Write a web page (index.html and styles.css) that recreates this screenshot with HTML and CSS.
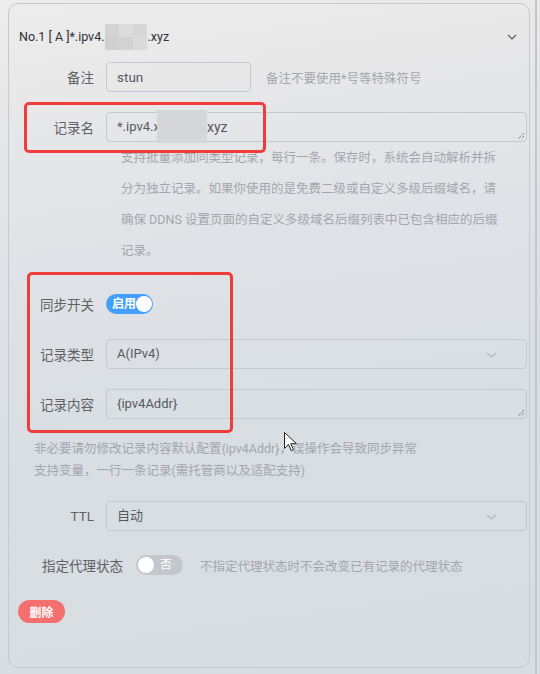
FILE: index.html
```html
<!DOCTYPE html>
<html lang="zh-CN">
<head>
<meta charset="utf-8">
<title>DDNS 记录</title>
<link rel="stylesheet" href="styles.css">
</head>
<body>
<div class="card">
  <div class="card-head">
    <span class="title">No.1 [ A ]*.ipv4.<span class="mask-title"><i></i><i></i><i></i><i></i><i></i><i></i></span>.xyz</span>
    <svg class="chev-head" width="10" height="6" viewBox="0 0 10 6"><path d="M1 1l4 4 4-4" fill="none" stroke="#555a60" stroke-width="1.2"/></svg>
  </div>

  <div class="form">
    <div class="row">
      <span class="lbl">备注</span>
      <div class="ctl ctl-short">stun</div>
      <span class="hint">备注不要使用*号等特殊符号</span>
    </div>

    <div class="row row-gap">
      <span class="lbl">记录名</span>
      <div class="ctl ctl-area">*.ipv4.x<span class="mask-area"></span><span class="after-mask">xyz</span>
        <svg class="grip" width="8" height="8" viewBox="0 0 8 8"><path d="M7 1L1 7M7 4L4 7" stroke="#555" stroke-width="1" stroke-dasharray="1 1"/></svg>
      </div>
    </div>
    <div class="help help-wide">支持批量添加同类型记录，每行一条。保存时，系统会自动解析并拆<br>分为独立记录。如果你使用的是免费二级或自定义多级后缀域名，请<br>确保 DDNS 设置页面的自定义多级域名后缀列表中已包含相应的后缀<br>记录。</div>

    <div class="row row-switch">
      <span class="lbl">同步开关</span>
      <span class="switch switch-on"><span class="switch-text">启用</span><span class="knob"></span></span>
    </div>

    <div class="row row-gap">
      <span class="lbl">记录类型</span>
      <div class="ctl ctl-select">A(IPv4)
        <svg class="chev-sel" width="11" height="6" viewBox="0 0 11 6"><path d="M1 1l4.5 4 4.5-4" fill="none" stroke="#b3b6bb" stroke-width="1.1"/></svg>
      </div>
    </div>

    <div class="row row-gap">
      <span class="lbl">记录内容</span>
      <div class="ctl ctl-area">{ipv4Addr}
        <svg class="grip" width="8" height="8" viewBox="0 0 8 8"><path d="M7 1L1 7M7 4L4 7" stroke="#555" stroke-width="1" stroke-dasharray="1 1"/></svg>
      </div>
    </div>

    <div class="help help-narrow">非必要请勿修改记录内容默认配置{ipv4Addr}，误操作会导致同步异常<br>支持变量，一行一条记录(需托管商以及适配支持)</div>

    <div class="row row-ttl">
      <span class="lbl">TTL</span>
      <div class="ctl ctl-select">自动
        <svg class="chev-sel" width="11" height="6" viewBox="0 0 11 6"><path d="M1 1l4.5 4 4.5-4" fill="none" stroke="#b3b6bb" stroke-width="1.1"/></svg>
      </div>
    </div>

    <div class="row row-proxy">
      <span class="lbl-proxy">指定代理状态</span>
      <span class="switch switch-off"><span class="knob"></span><span class="switch-text">否</span></span>
      <span class="hint hint-proxy">不指定代理状态时不会改变已有记录的代理状态</span>
    </div>

    <div class="actions">
      <button class="btn-del">删除</button>
    </div>
  </div>

  <div class="mark mark-name"></div>
  <div class="mark mark-group"></div>
</div>

<div class="scroll-edge"></div>

<svg class="cursor" width="13" height="20" viewBox="0 0 13 20"><path d="M0.5 0.5v16l4-4 2.8 6.3 2.2-1-2.7-6.1h5.7z" fill="#fff" stroke="#222" stroke-width="1" stroke-linejoin="round"/></svg>
</body>
</html>
```

FILE: styles.css
```css
* { box-sizing: border-box; }

html, body {
  margin: 0;
  height: 100%;
}

body {
  width: 540px;
  height: 674px;
  overflow: hidden;
  position: relative;
  padding: 3px 10px 0 8px;
  font-family: Roboto, "Noto Sans CJK SC", sans-serif;
  color: #606266;
  background: linear-gradient(172deg, #ececec 0%, #e8e8e9 14%, #dfe2e6 38%, #d9dee3 62%, #d8dde2 100%);
}

.card {
  position: relative;
  height: 665px;
  border: 1px solid #c6c9cd;
  border-radius: 10px;
  padding: 0 2px 0 10px;
}

.card-head {
  display: flex;
  align-items: center;
  justify-content: space-between;
  padding: 22px 10px 14px 0;
  height: 58px;
}

.title {
  font-size: 12.5px;
  line-height: 22px;
  color: #303133;
  display: flex;
  align-items: center;
  white-space: nowrap;
}

.mask-title {
  display: inline-grid;
  grid-template-columns: repeat(3, 14px);
  grid-template-rows: 13px 13px;
  width: 42px;
  height: 26px;
  margin-right: 1px;
}
.mask-title i:nth-child(1) { background: #d3d3d4; }
.mask-title i:nth-child(2) { background: #dcdcdd; }
.mask-title i:nth-child(3) { background: #d7d7d8; }
.mask-title i:nth-child(4) { background: #d0d0d1; }
.mask-title i:nth-child(5) { background: #d2d2d3; }
.mask-title i:nth-child(6) { background: #dadadb; }

.chev-head { display: block; }

.form {
  display: flex;
  flex-direction: column;
}

.row {
  display: flex;
  align-items: center;
  height: 30px;
}

.row-gap { margin-top: 20px; }
.row-switch { margin-top: 23px; }
.row-ttl { margin-top: 19px; }
.row-proxy { margin-top: 19px; }

.lbl {
  width: 75px;
  margin-right: 12px;
  text-align: right;
  font-size: 13.5px;
  color: #606266;
  flex: none;
  white-space: nowrap;
}

.lbl-proxy {
  padding-left: 23px;
  margin-right: 13px;
  font-size: 13.5px;
  color: #606266;
  flex: none;
  white-space: nowrap;
}

.ctl {
  position: relative;
  height: 30px;
  border: 1px solid #c5c8ce;
  border-radius: 4px;
  padding: 0 10px;
  font-size: 13px;
  line-height: 28px;
  color: #555a62;
  white-space: nowrap;
}

.ctl-short {
  width: 145px;
  margin-right: 15px;
  font-size: 13.5px;
}

.ctl-area,
.ctl-select {
  flex: 1;
}

.grip {
  position: absolute;
  right: 1px;
  bottom: 1px;
}

.mask-area {
  position: absolute;
  left: 50px;
  top: -3px;
  width: 50px;
  height: 33px;
  background: #d5d6d7;
}

.after-mask {
  position: absolute;
  left: 100px;
  top: 0;
  font-size: 14px;
}

.ctl-area:first-child { font-size: 14px; }

.chev-sel {
  position: absolute;
  right: 29px;
  top: 12px;
}

.hint {
  font-size: 12.5px;
  color: #a3a6ad;
  white-space: nowrap;
}

.hint-proxy { margin-left: 17px; }

.help {
  font-size: 12.5px;
  color: #a3a6ad;
  white-space: nowrap;
}

.help-wide {
  padding-left: 102px;
  line-height: 31px;
}

.help-narrow {
  margin-top: 19px;
  padding-left: 15px;
  line-height: 22px;
}

.switch {
  display: inline-flex;
  align-items: center;
  justify-content: space-between;
  width: 47px;
  height: 20px;
  border-radius: 10px;
  padding: 0 2px;
  flex: none;
  white-space: nowrap;
}

.switch-on {
  background: #449ffc;
  padding-left: 6px;
}

.switch-off {
  background: #c3c6cc;
  padding-right: 11px;
}

.switch-text {
  font-size: 12px;
  font-weight: 700;
  color: #fff;
  line-height: 20px;
}

.switch-off .switch-text { font-weight: 400; }

.knob {
  width: 16px;
  height: 16px;
  border-radius: 50%;
  background: #fff;
  flex: none;
}

.actions {
  margin-top: 20px;
  margin-left: -1px;
}

.btn-del {
  display: block;
  width: 47px;
  height: 23px;
  border: none;
  border-radius: 12px;
  background: #f46f6f;
  color: #fff;
  font-family: Roboto, "Noto Sans CJK SC", sans-serif;
  font-size: 12px;
  font-weight: 700;
  padding: 0;
}

.mark {
  position: absolute;
  border: 3px solid #ef3c3d;
  border-radius: 5px;
}

.mark-name {
  left: 15px;
  top: 98px;
  width: 242px;
  height: 51px;
}

.mark-group {
  left: 18px;
  top: 268px;
  width: 206px;
  height: 161px;
}

.scroll-edge {
  position: absolute;
  left: 535px;
  top: 0;
  width: 2px;
  height: 674px;
  background: #c4c6c9;
}

.cursor {
  position: absolute;
  left: 284px;
  top: 432px;
}
```
